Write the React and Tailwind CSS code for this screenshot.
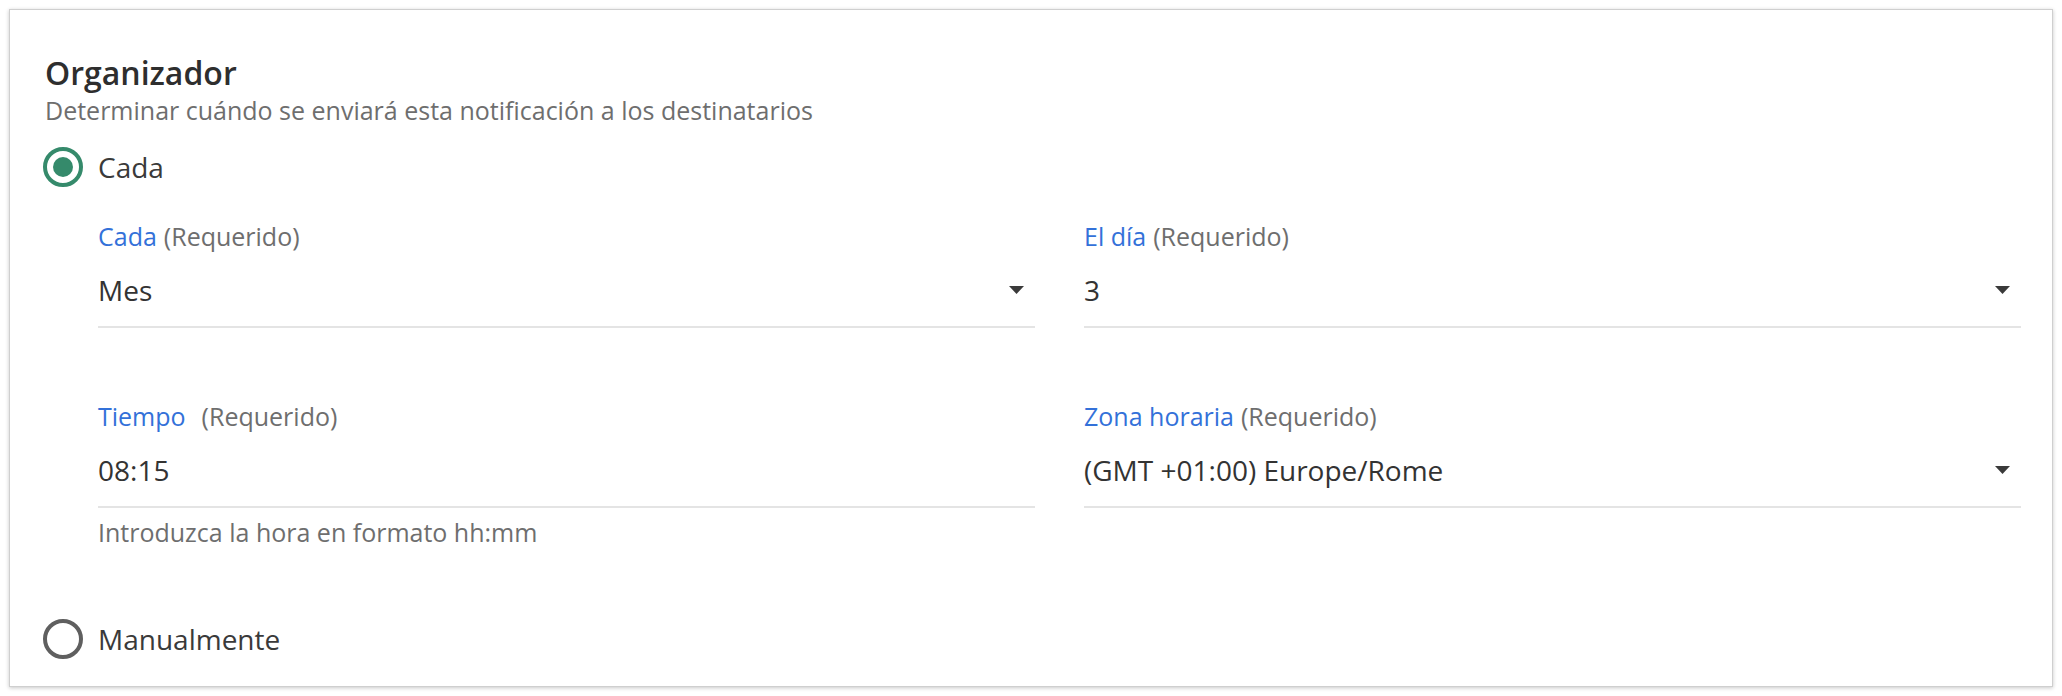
import React from "react";

const font = { fontFamily: '"Open Sans", "Noto Sans", Arial, sans-serif' };

function Radio({ checked, label }) {
  return (
    <div className="flex items-center h-[40px]">
      <span
        className={`flex items-center justify-center w-[40px] h-[40px] rounded-full border-[4px] ${
          checked ? "border-[#358a6b]" : "border-[#5f5f5f]"
        }`}
      >
        {checked && <span className="w-[20px] h-[20px] rounded-full bg-[#358a6b]" />}
      </span>
      <span className="ml-[15px] text-[28px] leading-[34px] text-[#3a3a3a]">{label}</span>
    </div>
  );
}

function Arrow() {
  return (
    <svg width="15" height="8" viewBox="0 0 15 8" className="mr-[11px] shrink-0">
      <polygon points="0,0 15,0 7.5,8" fill="#3a3a3a" />
    </svg>
  );
}

function Field({ label, gap, value, select, helper }) {
  return (
    <div className="flex flex-col">
      <div className="text-[25px] leading-[30px] text-[#6e6e6e] whitespace-nowrap">
        <span className="text-[#3371d9]">{label}</span>
        <span className={gap ? "ml-[16px]" : "ml-[7px]"}>(Requerido)</span>
      </div>
      <div className="mt-[22px] flex items-center justify-between pb-[19px] border-b-2 border-[#e4e4e4]">
        <span className="text-[28px] leading-[34px] text-[#333333]">{value}</span>
        {select && <Arrow />}
      </div>
      {helper && (
        <div className="mt-[11px] text-[25px] leading-[26px] text-[#6e6e6e]">{helper}</div>
      )}
    </div>
  );
}

export default function App() {
  return (
    <div className="bg-white min-h-[696px] pl-[9px] pt-[9px]" style={font}>
      <div className="w-[2044px] bg-white border border-[#cfcfcf] shadow-[0_1px_4px_rgba(0,0,0,0.22)] pl-[33px] pr-[31px] pt-[45px] pb-[27px]">
        <h2 className="text-[32px] leading-[36px] font-semibold text-[#2e2e2e] ml-[2px]">Organizador</h2>
        <p className="mt-[6px] ml-[2px] text-[25px] leading-[26px] text-[#6e6e6e]">
          Determinar cuándo se enviará esta notificación a los destinatarios
        </p>

        <div className="mt-[24px]">
          <Radio checked label="Cada" />
        </div>

        <div className="ml-[55px] mt-[34px] grid grid-cols-2 gap-x-[49px] gap-y-[73px]">
          <Field label="Cada" value="Mes" select />
          <Field label="El día" value="3" select />
          <Field
            label="Tiempo"
            gap
            value="08:15"
            helper="Introduzca la hora en formato hh:mm"
          />
          <Field label="Zona horaria" value="(GMT +01:00) Europe/Rome" select />
        </div>

        <div className="mt-[74px]">
          <Radio label="Manualmente" />
        </div>
      </div>
    </div>
  );
}
